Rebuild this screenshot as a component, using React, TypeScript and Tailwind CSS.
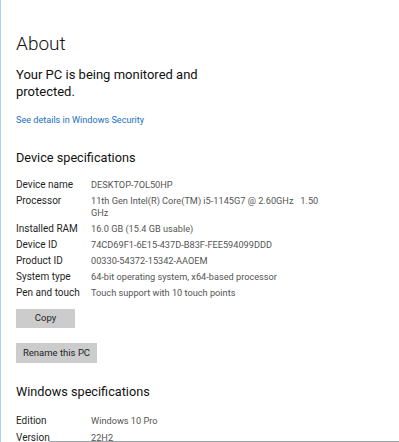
const specs: [string, string[]][] = [
  ["Device name", ["DESKTOP-7OL50HP"]],
  ["Processor", ["11th Gen Intel(R) Core(TM) i5-1145G7 @ 2.60GHz   1.50", "GHz"]],
  ["Installed RAM", ["16.0 GB (15.4 GB usable)"]],
  ["Device ID", ["74CD69F1-6E15-437D-B83F-FEE594099DDD"]],
  ["Product ID", ["00330-54372-15342-AAOEM"]],
  ["System type", ["64-bit operating system, x64-based processor"]],
  ["Pen and touch", ["Touch support with 10 touch points"]],
];

const winSpecs: [string, string][] = [
  ["Edition", "Windows 10 Pro"],
  ["Version", "22H2"],
];

function SpecRow({ label, lines }: { label: string; lines: string[] }) {
  return (
    <div className="flex leading-[12px]">
      <div className="w-[75px] shrink-0 text-[10px] text-[#1f1f1f]">{label}</div>
      <div className="text-[9.2px] text-[#555] whitespace-pre">
        {lines.map((l) => (
          <div key={l} className="h-[12px]">
            {l}
          </div>
        ))}
      </div>
    </div>
  );
}

export default function App() {
  return (
    <div
      className="relative w-[399px] h-[442px] overflow-hidden bg-white border-l border-l-[#a8d4ea]"
      style={{ fontFamily: 'Roboto, "Noto Sans", sans-serif' }}
    >
      <div className="pl-[15px] pt-[32px]">
        <h1 className="text-[19px] leading-[24px] font-light text-[#111]">About</h1>

        <p className="mt-[10px] text-[13px] leading-[17px] text-[#111] w-[200px]">
          Your PC is being monitored and protected.
        </p>

        <a className="block mt-[13px] text-[9.1px] leading-[14px] text-[#1a6fc1]">
          See details in Windows Security
        </a>

        <h2 className="mt-[21px] text-[12.7px] leading-[20px] text-[#111]">
          Device specifications
        </h2>

        <div className="mt-[11px] flex flex-col gap-[4px]">
          {specs.map(([label, lines]) => (
            <SpecRow key={label} label={label} lines={lines} />
          ))}
        </div>

        <div className="mt-[10px] flex flex-col items-start gap-[15px]">
          <button className="w-[59px] h-[19px] bg-[#cccccc] text-[9.5px] text-[#1f1f1f]">
            Copy
          </button>
          <button className="w-[81px] h-[20px] bg-[#cccccc] text-[9.5px] text-[#1f1f1f]">
            Rename this PC
          </button>
        </div>

        <h2 className="mt-[19px] text-[12.7px] leading-[20px] text-[#111]">
          Windows specifications
        </h2>

        <div className="mt-[13px] flex flex-col gap-[5px]">
          {winSpecs.map(([label, value]) => (
            <SpecRow key={label} label={label} lines={[value]} />
          ))}
        </div>
      </div>
      <div className="absolute left-[48px] right-0 bottom-0 h-px bg-[#9aa5ab]" />
    </div>
  );
}
